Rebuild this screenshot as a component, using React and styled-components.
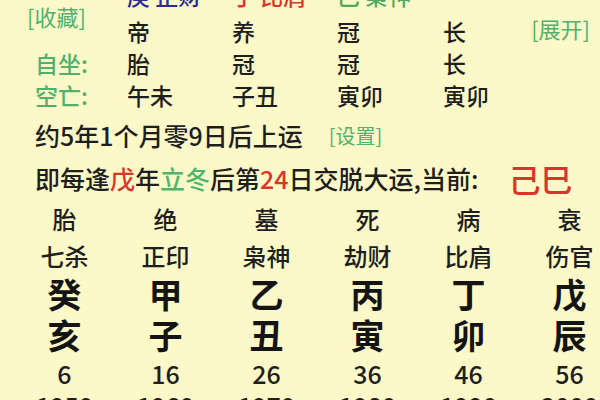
import React from 'react'
import styled, { createGlobalStyle } from 'styled-components'

const GlobalStyle = createGlobalStyle`
  html, body {
    margin: 0;
    padding: 0;
    background: #fcf8c8;
  }
  body {
    font-family: "Noto Sans CJK SC", "Noto Sans", sans-serif;
    font-weight: 500;
    color: #1e1e1e;
  }
`

const Page = styled.div`
  width: 600px;
  height: 400px;
  overflow: hidden;
  background: #fcf8c8;
`

const TopGrid = styled.div`
  display: grid;
  grid-template-columns: 127px 105px 105px 106px 1fr auto;
  grid-template-rows: 40px 32px 32px 32px;
  margin-top: -25px;
  padding-right: 10px;
  font-size: 23px;
  align-items: center;
`

const Cell = styled.div`
  grid-row: ${(p) => p.$row};
  grid-column: ${(p) => p.$col};
  color: ${(p) => p.$color || '#1e1e1e'};
  line-height: 32px;
  white-space: nowrap;
`

const Label = styled.div`
  grid-row: ${(p) => p.$row};
  grid-column: 1;
  color: #52b06c;
  padding-left: 35px;
  line-height: 32px;
`

const Link = styled.div`
  color: #52b06c;
  font-size: 22px;
  font-weight: 400;
  line-height: 26px;
  white-space: nowrap;
`

const Collect = styled(Link)`
  grid-row: 1 / 3;
  grid-column: 1;
  align-self: end;
  margin-bottom: 18px;
  padding-left: 27px;
`

const Expand = styled(Link)`
  grid-row: 2;
  grid-column: 6;
  align-self: start;
`

const Line = styled.div`
  display: flex;
  align-items: center;
  padding-left: 35px;
  height: ${(p) => p.$h}px;
  font-size: 25px;
  white-space: nowrap;
`

const Red = styled.span`
  color: #d8352b;
`

const Green = styled.span`
  color: #4fb46c;
`

const Setting = styled.span`
  color: #52b06c;
  font-size: 20px;
  font-weight: 400;
  margin-left: 26px;
`

const Current = styled(Red)`
  font-size: 32px;
  margin-left: 30px;
`

const Dayun = styled.div`
  display: grid;
  grid-template-columns: repeat(6, 101px);
  grid-template-rows: 40px 34px 42px 40px 36px 28px;
  padding-left: 14px;
  align-items: center;
  justify-items: center;
`

const Small = styled.div`
  font-size: ${(p) => p.$size}px;
  line-height: 1;
  white-space: nowrap;
`

const Big = styled.div`
  font-size: 34px;
  font-weight: 700;
  line-height: 1;
  color: #141414;
`

const topCut = [
  { text: '庚 正财', color: '#2b2c92' },
  { text: '丁 比肩', color: '#d8352b' },
  { text: '巳 枭神', color: '#4fa85f' },
]

const rows = [
  { label: null, items: ['帝', '养', '冠', '长'] },
  { label: '自坐:', items: ['胎', '冠', '冠', '长'] },
  { label: '空亡:', items: ['午未', '子丑', '寅卯', '寅卯'] },
]

const stages = ['胎', '绝', '墓', '死', '病', '衰']
const gods = ['七杀', '正印', '枭神', '劫财', '比肩', '伤官']
const stems = ['癸', '甲', '乙', '丙', '丁', '戊']
const branches = ['亥', '子', '丑', '寅', '卯', '辰']
const ages = [6, 16, 26, 36, 46, 56]
const years = [1950, 1960, 1970, 1980, 1990, 2000]

const App = () => {
  return (
    <>
      <GlobalStyle />
      <Page>
        <TopGrid>
          {topCut.map((t, j) => (
            <Cell key={t.text} $row={1} $col={j + 2} $color={t.color}>{t.text}</Cell>
          ))}
          <Collect>[收藏]</Collect>
          {rows.map((r, i) => (
            <React.Fragment key={i}>
              {r.label ? <Label $row={i + 2}>{r.label}</Label> : null}
              {r.items.map((it, j) => (
                <Cell key={j} $row={i + 2} $col={j + 2}>{it}</Cell>
              ))}
            </React.Fragment>
          ))}
          <Expand>[展开]</Expand>
        </TopGrid>

        <Line $h={44} style={{ marginTop: 2 }}>
          约5年1个月零9日后上运<Setting>[设置]</Setting>
        </Line>
        <Line $h={42}>
          即每逢<Red>戊</Red>年<Green>立冬</Green>后第<Red>24</Red>日交脱大运,当前:
          <Current>己巳</Current>
        </Line>

        <Dayun>
          {stages.map((s) => <Small key={s} $size={24}>{s}</Small>)}
          {gods.map((g) => <Small key={g} $size={24}>{g}</Small>)}
          {stems.map((s) => <Big key={s}>{s}</Big>)}
          {branches.map((b) => <Big key={b}>{b}</Big>)}
          {ages.map((a) => <Small key={a} $size={25}>{a}</Small>)}
          {years.map((y) => <Small key={y} $size={25}>{y}</Small>)}
        </Dayun>
      </Page>
    </>
  )
}

export default App
